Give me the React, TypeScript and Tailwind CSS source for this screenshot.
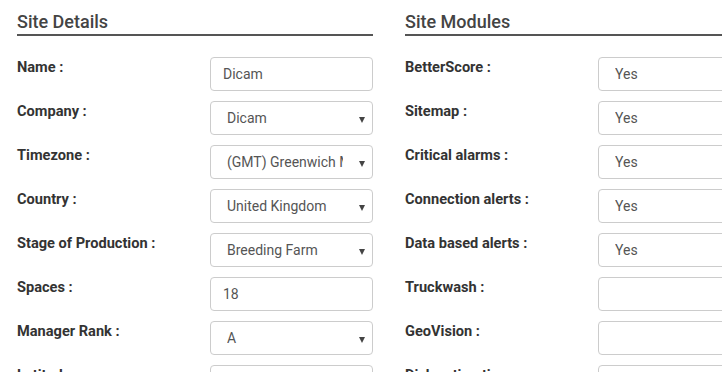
import React from "react";

type Field = { label: string; value?: string; select?: boolean };

const siteDetails: Field[] = [
  { label: "Name :", value: "Dicam" },
  { label: "Company :", value: "Dicam", select: true },
  { label: "Timezone :", value: "(GMT) Greenwich Mean Time", select: true },
  { label: "Country :", value: "United Kingdom", select: true },
  { label: "Stage of Production :", value: "Breeding Farm", select: true },
  { label: "Spaces :", value: "18" },
  { label: "Manager Rank :", value: "A", select: true },
  { label: "Latitude :", value: "" },
];

const siteModules: Field[] = [
  { label: "BetterScore :", value: "Yes", select: true },
  { label: "Sitemap :", value: "Yes", select: true },
  { label: "Critical alarms :", value: "Yes", select: true },
  { label: "Connection alerts :", value: "Yes", select: true },
  { label: "Data based alerts :", value: "Yes", select: true },
  { label: "Truckwash :", value: "", select: true },
  { label: "GeoVision :", value: "", select: true },
  { label: "Disk estimation :", value: "", select: true },
];

const FieldRow = ({ field }: { field: Field }) => {
  return (
    <div className="flex items-start mb-[10px]">
      <div className="w-[193px] shrink-0 text-[14.6px] leading-[20px] font-bold text-[#333]">
        {field.label}
      </div>
      <div
        className={
          "relative w-[163px] h-[34px] shrink-0 rounded-[4px] border border-[#ccc] bg-white flex items-center text-[14px] text-[#555] " +
          (field.select ? "pl-4" : "pl-3")
        }
      >
        <span
          className={
            "block overflow-hidden whitespace-nowrap " +
            (field.select ? "w-[116px]" : "w-full")
          }
        >
          {field.value}
        </span>
        {field.select && (
          <span className="absolute right-[7px] top-[15px] w-0 h-0 border-l-[3px] border-r-[3px] border-t-[6px] border-l-transparent border-r-transparent border-t-[#444]" />
        )}
      </div>
    </div>
  );
};

const Section = ({ title, fields }: { title: string; fields: Field[] }) => {
  return (
    <div className="w-[356px] shrink-0">
      <div className="mt-[12px] pb-[2px] border-b-2 border-[#555]">
        <h2 className="text-[18px] leading-[20px] font-medium text-[#444]">
          {title}
        </h2>
      </div>
      <div className="mt-[21px]">
        {fields.map((f) => (
          <FieldRow key={f.label} field={f} />
        ))}
      </div>
    </div>
  );
};

export default function App() {
  return (
    <div
      className="w-[722px] h-[372px] overflow-hidden bg-white"
      style={{ fontFamily: "Roboto, 'Liberation Sans', sans-serif" }}
    >
      <div className="flex gap-[32px] pl-[17px]">
        <Section title="Site Details" fields={siteDetails} />
        <Section title="Site Modules" fields={siteModules} />
      </div>
    </div>
  );
}
